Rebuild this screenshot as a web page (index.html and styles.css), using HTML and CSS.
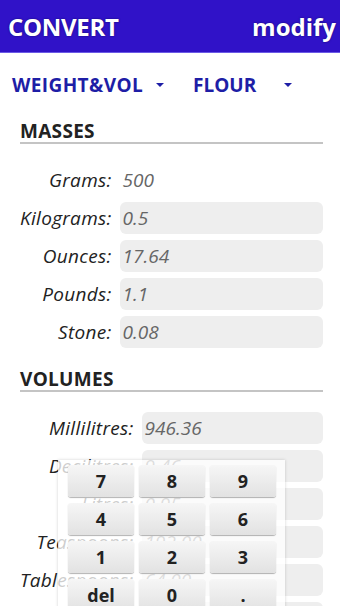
FILE: index.html
```html
<!DOCTYPE html>
<html lang="en">
<head>
<meta charset="UTF-8" />
<meta name="viewport" content="width=device-width, initial-scale=1.0" />
<title>Convert</title>
<link rel="stylesheet" href="styles.css">
</head>
<body>
<div class="topbar">
  <span class="title">CONVERT</span>
  <span class="action">modify</span>
</div>
<div class="spinners">
  <div class="spinner first">WEIGHT&amp;VOL <span class="caret"></span></div>
  <div class="spinner second">FLOUR <span class="caret"></span></div>
</div>

<div class="group">
  <h3>MASSES</h3>
  <div class="rows">
    <label>Grams:</label><div class="val editing">500</div>
    <label>Kilograms:</label><div class="val">0.5</div>
    <label>Ounces:</label><div class="val">17.64</div>
    <label>Pounds:</label><div class="val">1.1</div>
    <label>Stone:</label><div class="val">0.08</div>
  </div>
</div>

<div class="group">
  <h3>VOLUMES</h3>
  <div class="rows">
    <label>Millilitres:</label><div class="val">946.36</div>
    <label>Decilitres:</label><div class="val">9.46</div>
    <label>Litres:</label><div class="val">0.95</div>
    <label>Teaspoons:</label><div class="val">192.00</div>
    <label>Tablespoons:</label><div class="val">64.00</div>
    <label>Cups:</label><div class="val">4.00</div>
  </div>
</div>

<div class="keypad">
  <div class="key">7</div><div class="key">8</div><div class="key">9</div>
  <div class="key">4</div><div class="key">5</div><div class="key">6</div>
  <div class="key">1</div><div class="key">2</div><div class="key">3</div>
  <div class="key">del</div><div class="key">0</div><div class="key">.</div>
</div>
</body>
</html>
```

FILE: styles.css
```css
html, body {
  overflow: hidden;
}
body {
  margin: 0;
  font-family: "Open Sans", "Noto Sans", sans-serif;
  background: #fff;
  color: #222;
  position: relative;
  height: 606px;
}
.topbar {
  height: 52px;
  background: #3012c8;
  border-bottom: 1px solid #6b5ae6;
  display: flex;
  justify-content: space-between;
  align-items: center;
  padding: 0 4px 0 8px;
  color: #fff;
  font-weight: 700;
  font-size: 24px;
}
.topbar span {
  text-shadow: 0 0 2px rgba(0, 0, 60, 0.7);
}
.topbar .title {
  letter-spacing: -0.3px;
}
.spinners {
  display: flex;
  padding-top: 20px;
  height: 24px;
  line-height: 24px;
  font-size: 19px;
  font-weight: 700;
  color: #1e1ea6;
}
.spinner {
  display: flex;
  align-items: center;
}
.spinner.first {
  margin-left: 12px;
  width: 181px;
  letter-spacing: 0.4px;
}
.spinner.first .caret {
  margin-left: 13px;
}
.spinner.second .caret {
  margin-left: 28px;
}
.caret {
  width: 0;
  height: 0;
  border-left: 4px solid transparent;
  border-right: 4px solid transparent;
  border-top: 4px solid #1e1ea6;
}
.group {
  margin: 23px 17px 0 20px;
}
.group + .group {
  margin-top: 20px;
}
h3 {
  margin: 0 0 20px;
  font-size: 19px;
  line-height: 22px;
  font-weight: 700;
  letter-spacing: 0.3px;
  border-bottom: 2px solid #c4c4c4;
}
.rows {
  display: grid;
  grid-template-columns: max-content 1fr;
  column-gap: 8px;
  row-gap: 6px;
}
.rows label {
  text-align: right;
  font-style: italic;
  font-size: 19px;
  letter-spacing: 0.3px;
  line-height: 32px;
  color: #222;
}
.val {
  height: 32px;
  line-height: 32px;
  background: #eee;
  border-radius: 6px;
  padding-left: 3px;
  font-style: italic;
  font-size: 19px;
  color: #666;
}
.val.editing {
  background: transparent;
}
.keypad {
  position: absolute;
  left: 58px;
  top: 460px;
  width: 208px;
  height: 160px;
  padding: 5px 9px 0 10px;
  background: rgba(255, 255, 255, 0.78);
  box-shadow: 0 0 3px rgba(0, 0, 0, 0.18);
  display: grid;
  grid-template-columns: repeat(3, 1fr);
  grid-auto-rows: 32px;
  gap: 6px 5px;
}
.key {
  background: linear-gradient(#f6f6f6, #e2e2e2);
  border-radius: 3px;
  box-shadow: 0 1px 1px rgba(0, 0, 0, 0.3);
  text-align: center;
  line-height: 32px;
  font-size: 18px;
  font-weight: 700;
  color: #222;
}
```
